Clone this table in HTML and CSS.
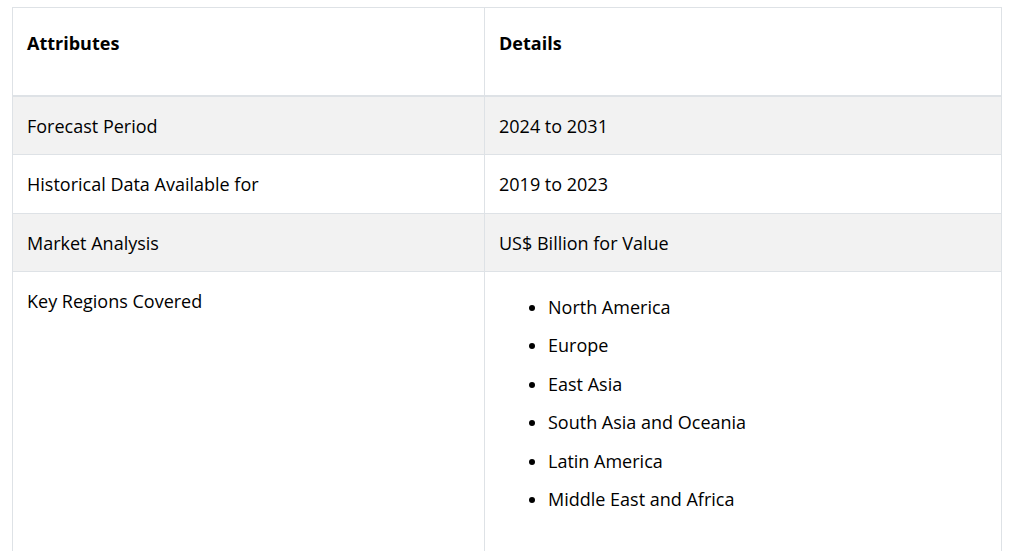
FILE: index.html
```html
<!DOCTYPE html>
<html lang="en">
<head>
    <meta charset="UTF-8">
    <title>Report Scope</title>
    <link rel="stylesheet" href="styles.css">
</head>
<body>
    <table class="scope">
        <thead>
            <tr>
                <th class="col-attr">Attributes</th>
                <th>Details</th>
            </tr>
        </thead>
        <tbody>
            <tr class="odd">
                <td>Forecast Period</td>
                <td>2024 to 2031</td>
            </tr>
            <tr>
                <td>Historical Data Available for</td>
                <td>2019 to 2023</td>
            </tr>
            <tr class="odd">
                <td>Market Analysis</td>
                <td>US$ Billion for Value</td>
            </tr>
            <tr>
                <td>Key Regions Covered</td>
                <td>
                    <ul class="regions">
                        <li>North America</li>
                        <li>Europe</li>
                        <li>East Asia</li>
                        <li>South Asia and Oceania</li>
                        <li>Latin America</li>
                        <li>Middle East and Africa</li>
                    </ul>
                </td>
            </tr>
        </tbody>
    </table>
</body>
</html>
```

FILE: styles.css
```css
body{
    margin:0;
    padding:7px 13px 0 12px;
    background:#fff;
    font-family:"Open Sans", "Noto Sans", sans-serif;
    font-size:18px;
    color:#000;
}
.scope{
    width:990px;
    border-collapse:collapse;
    border:1px solid #dee2e6;
}
.scope th,
.scope td{
    border:1px solid #dee2e6;
    padding:16px 15px 14px 14px;
    line-height:27.5px;
    text-align:left;
    vertical-align:top;
}
.scope th{
    font-weight:700;
    padding-top:22px;
    padding-bottom:37px;
    border-bottom:2px solid #dee2e6;
}
.col-attr{
    width:442px;
}
.odd td{
    background:#f2f2f2;
}
.regions{
    margin:6px 0 40px;
    padding-left:49px;
}
.regions li{
    margin-bottom:10.9px;
}
```
